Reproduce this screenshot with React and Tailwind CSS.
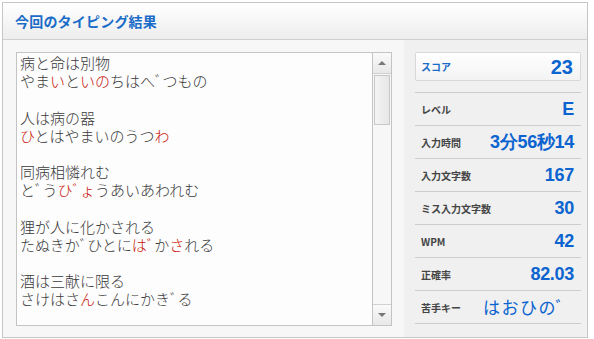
const lines = [
  [['病と命は別物']],
  [['やま'], ['い', 1], ['と'], ['いの', 1], ['ちはへﾞつもの']],
  null,
  [['人は病の器']],
  [['ひ', 1], ['とはやまいのうつ'], ['わ', 1]],
  null,
  [['同病相憐れむ']],
  [['と'], ['ﾞ', 1], ['う'], ['ひﾞょ', 1], ['うあいあわれむ']],
  null,
  [['狸が人に化かされる']],
  [['たぬきかﾞひとに'], ['はﾞ', 1], ['か'], ['さ', 1], ['れる']],
  null,
  [['酒は三献に限る']],
  [['さけはさ'], ['ん', 1], ['こんにかきﾞる']],
];

const stats = [
  ['レベル', 'E'],
  ['入力時間', '3分56秒14'],
  ['入力文字数', '167'],
  ['ミス入力文字数', '30'],
  ['WPM', '42'],
  ['正確率', '82.03'],
];

function ScrollBar() {
  return (
    <div className="flex flex-col w-[19px] border-l border-[#c4c4c4] bg-[#f7f7f7]">
      <div className="h-[21px] flex items-center justify-center border-b border-[#d0d0d0] bg-gradient-to-b from-[#fafafa] to-[#e8e8e8]">
        <div className="w-0 h-0 border-l-[4px] border-r-[4px] border-b-[4px] border-l-transparent border-r-transparent border-b-[#777]" />
      </div>
      <div className="mx-[1px] mt-[1px] h-[50px] border border-[#c8c8c8] bg-gradient-to-r from-[#f4f4f4] to-[#e6e6e6]" />
      <div className="flex-1" />
      <div className="h-[21px] flex items-center justify-center border-t border-[#d0d0d0] bg-gradient-to-b from-[#fafafa] to-[#e8e8e8]">
        <div className="w-0 h-0 border-l-[4px] border-r-[4px] border-t-[4px] border-l-transparent border-r-transparent border-t-[#777]" />
      </div>
    </div>
  );
}

export default function App() {
  return (
    <div className="w-[594px] h-[339px] bg-white pl-[2px] pt-[2px] font-['Noto_Sans_CJK_JP',sans-serif]">
      <div className="w-[586px] h-[336px] border border-[#c6c6c6] flex flex-col bg-[#f7f7f7]">
        <div className="h-[37px] shrink-0 border-b border-[#cfcfcf] bg-gradient-to-b from-[#ffffff] to-[#ededed] flex items-center pl-[12px]">
          <h1 className="text-[14px] font-bold text-[#1a6cc8] tracking-[0.2px] font-['Noto_Sans_CJK_JP',sans-serif]">
            今回のタイピング結果
          </h1>
        </div>
        <div className="flex flex-1 pl-[13px]">
          <div className="mt-[12px] w-[376px] h-[274px] border border-[#c4c4c4] bg-[#fdfdfd] flex">
            <div className="flex-1 pl-[3px] pt-[1px] text-[15px] leading-[18.2px] text-[#3a3a3a] font-['Noto_Sans_CJK_JP',sans-serif] font-light">
              {lines.map((line, i) =>
                line ? (
                  <div key={i} className="whitespace-nowrap h-[18.2px]">
                    {line.map(([t, red], j) => (
                      <span key={j} className={red ? 'text-[#c8140a]' : ''}>
                        {t}
                      </span>
                    ))}
                  </div>
                ) : (
                  <div key={i} className="h-[18.2px]" />
                )
              )}
            </div>
            <ScrollBar />
          </div>
          <div className="ml-[12px] flex-1 bg-[#f0f0f0] pl-[11px] pr-[6px] pt-[12px] font-['Noto_Sans_CJK_JP',sans-serif]">
            <div className="h-[29px] border border-[#d8d8d8] rounded-[2px] bg-gradient-to-b from-[#ffffff] to-[#f3f3f3] flex items-center justify-between pl-[5px] pr-[7px]">
              <span className="text-[10px] font-bold text-[#1a6cc8]">スコア</span>
              <span className="text-[20px] font-bold text-[#0b64cf] font-['Liberation_Sans',sans-serif]">23</span>
            </div>
            <div className="h-[12px] border-b border-[#cdcdcd]" />
            {stats.map(([label, value]) => (
              <div key={label} className="h-[33px] border-b border-[#cdcdcd] flex items-center justify-between pl-[6px] pr-[7px]">
                <span className="text-[10px] font-bold text-[#444] whitespace-nowrap">{label}</span>
                <span className="text-[18px] font-bold text-[#0b64cf] font-['Liberation_Sans',sans-serif] tracking-[-0.3px] whitespace-nowrap">{value}</span>
              </div>
            ))}
            <div className="h-[33px] border-b border-[#cdcdcd] flex items-center pl-[6px]">
              <span className="text-[10px] font-bold text-[#444] w-[62px] whitespace-nowrap">苦手キー</span>
              <span className="text-[17px] text-[#0b64cf] tracking-[1.5px] whitespace-nowrap font-['Noto_Sans_CJK_JP',sans-serif]">はおひのﾞ</span>
            </div>
          </div>
        </div>
      </div>
    </div>
  );
}
